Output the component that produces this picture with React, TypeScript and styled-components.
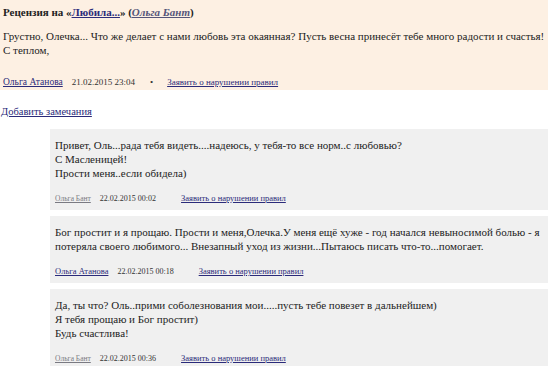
import React from "react";
import styled, { createGlobalStyle } from "styled-components";

const Global = createGlobalStyle`
  html, body { margin: 0; padding: 0; background: #ffffff; overflow: hidden; }
`;

const Page = styled.div`
  width: 548px;
  overflow: hidden;
  font-family: "Liberation Serif", "Times New Roman", serif;
  color: #222;
`;

const Review = styled.div`
  background: #fdf0e3;
  padding: 6px 0 2px 3px;
  display: flex;
  flex-direction: column;
  white-space: nowrap;
`;

const Title = styled.div`
  font-size: 11px;
  line-height: 13px;
  font-weight: bold;
`;

const Link = styled.a<{ $muted?: boolean; $size?: number }>`
  color: ${(p) => (p.$muted ? "#7a7a82" : "#2b2b7a")};
  font-size: ${(p) => (p.$size ? `${p.$size}px` : "inherit")};
  text-decoration: underline;
`;

const AuthorLink = styled.a`
  color: #55557a;
  font-style: italic;
  text-decoration: underline;
`;

const Body = styled.div<{ $top?: number }>`
  margin-top: ${(p) => p.$top ?? 0}px;
  font-size: 11px;
  line-height: 14px;
`;

const Meta = styled.div<{ $gap: number; $size: number }>`
  margin-top: ${(p) => p.$gap}px;
  font-size: ${(p) => p.$size}px;
  line-height: 12px;
  display: flex;
  align-items: baseline;
  gap: 9px;
  color: #333;
`;

const Date = styled.span<{ $after: number; $size: number }>`
  font-size: ${(p) => p.$size}px;
  margin-right: ${(p) => p.$after}px;
`;

const Dot = styled.span`
  margin-right: 5px;
`;

const AddNote = styled.div`
  margin: 15px 0 0 1px;
  font-size: 10.5px;
  line-height: 13px;
`;

const Notes = styled.div`
  margin-top: 11px;
  padding-left: 50px;
  display: flex;
  flex-direction: column;
  gap: 6px;
`;

const Note = styled.div`
  background: #f0f0f0;
  padding: 9px 0 5px 5px;
  white-space: nowrap;
`;

type NoteData = { lines: string[]; author: string; muted: boolean; date: string };

const notes: NoteData[] = [
  {
    lines: [
      "Привет, Оль...рада тебя видеть....надеюсь, у тебя-то все норм..с любовью?",
      "С Масленицей!",
      "Прости меня..если обидела)",
    ],
    author: "Ольга Бант",
    muted: true,
    date: "22.02.2015 00:02",
  },
  {
    lines: [
      "Бог простит и я прощаю. Прости и меня,Олечка.У меня ещё хуже - год начался невыносимой болью - я",
      "потеряла своего любимого... Внезапный уход из жизни...Пытаюсь писать что-то...помогает.",
    ],
    author: "Ольга Атанова",
    muted: false,
    date: "22.02.2015 00:18",
  },
  {
    lines: [
      "Да, ты что? Оль..прими соболезнования мои.....пусть тебе повезет в дальнейшем)",
      "Я тебя прощаю и Бог простит)",
      "Будь счастлива!",
    ],
    author: "Ольга Бант",
    muted: true,
    date: "22.02.2015 00:36",
  },
];

export default function App() {
  return (
    <Page>
      <Global />
      <Review>
        <Title>
          Рецензия на «<Link href="#">Любила...</Link>» (<AuthorLink href="#">Ольга Бант</AuthorLink>)
        </Title>
        <Body $top={10}>
          Грустно, Олечка... Что же делает с нами любовь эта окаянная? Пусть весна принесёт тебе много радости и счастья!
          <br />С теплом,
        </Body>
        <Meta $gap={19} $size={9}>
          <Link href="#" $size={9.5}>Ольга Атанова</Link>
          <Date $after={6} $size={9}>21.02.2015 23:04</Date>
          <Dot>•</Dot>
          <Link href="#">Заявить о нарушении правил</Link>
        </Meta>
      </Review>
      <AddNote>
        <Link href="#">Добавить замечания</Link>
      </AddNote>
      <Notes>
        {notes.map((n, i) => (
          <Note key={i}>
            <Body>
              {n.lines.map((l, j) => (
                <React.Fragment key={j}>
                  {j > 0 && <br />}
                  {l}
                </React.Fragment>
              ))}
            </Body>
            <Meta $gap={12} $size={8.5}>
              <Link href="#" $muted={n.muted} $size={n.muted ? 7.5 : undefined}>{n.author}</Link>
              <Date $after={16} $size={8}>{n.date}</Date>
              <Link href="#">Заявить о нарушении правил</Link>
            </Meta>
          </Note>
        ))}
      </Notes>
    </Page>
  );
}
